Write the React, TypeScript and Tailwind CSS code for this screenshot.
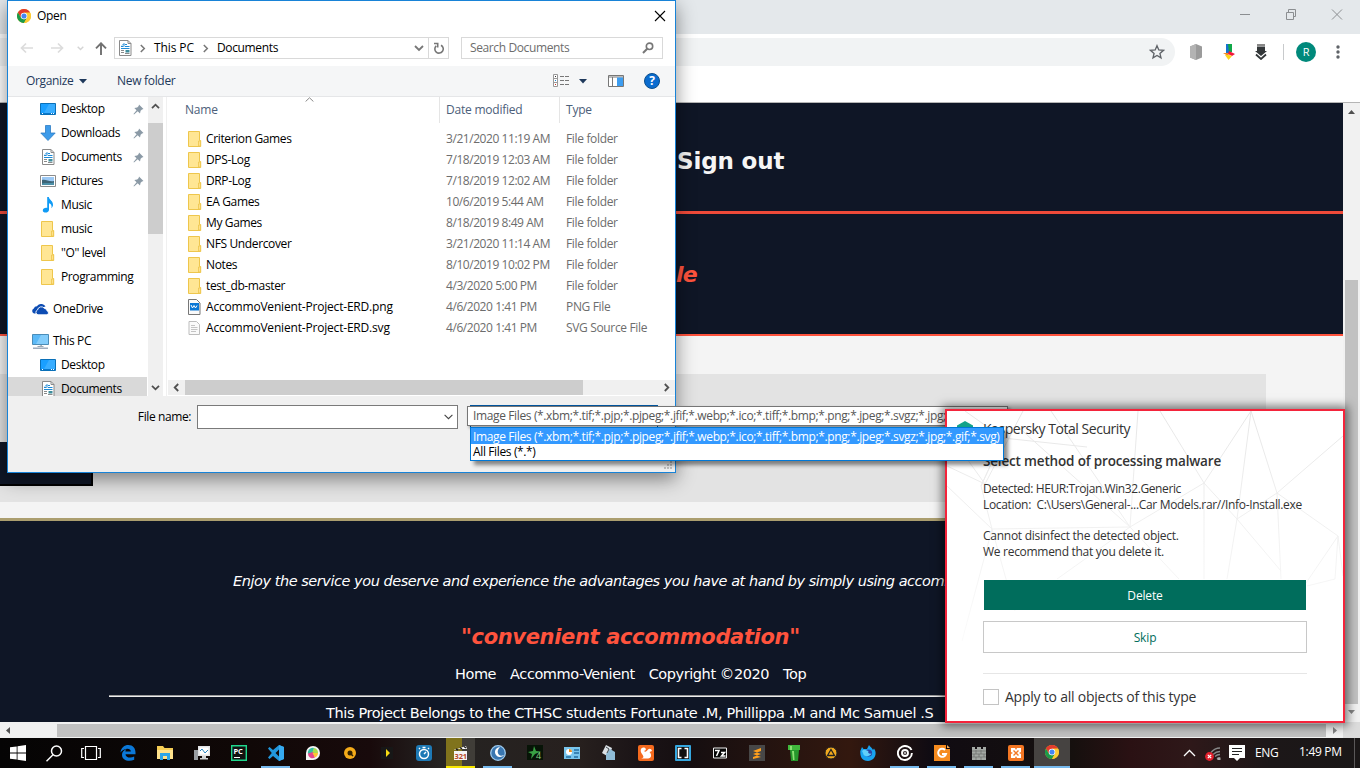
import React from "react";

const MASK = "*.xbm;*.tif;*.pjp;*.pjpeg;*.jfif;*.webp;*.ico;*.tiff;*.bmp;*.png;*.jpeg;*.svgz;*.jpg;*.gif;*.svg";

function Chrome({ s = 14 }: { s?: number }) {
  return (
    <svg width={s} height={s} viewBox="0 0 24 24" className="shrink-0">
      <circle cx="12" cy="12" r="12" fill="#fbc116" />
      <path d="M1.6 6A12 12 0 0 1 22.4 6L12 6.3 6.8 15Z" fill="#e33b2e" />
      <path d="M1.6 6A12 12 0 0 0 12 24L17.2 15 12 18 6.8 15Z" fill="#1a9a4b" />
      <path d="M12 6.3H22.6A12 12 0 0 1 12 24L17.5 14Z" fill="#fdcb35" />
      <circle cx="12" cy="12" r="5.6" fill="#fff" />
      <circle cx="12" cy="12" r="4.4" fill="#4486f4" />
    </svg>
  );
}

function Folder() {
  return (
    <svg width="14" height="16" viewBox="0 0 14 16" className="shrink-0">
      <path d="M.5.5h11v9h1.200v6H.5z" fill="#ffe694" stroke="#eec64c" />
      <path d="M10.500 15V10h2v5z" fill="#ffe08a" stroke="#eec64c" strokeWidth=".8" />
    </svg>
  );
}

function DocIcon() {
  return (
    <svg width="13" height="16" viewBox="0 0 13 16" className="shrink-0">
      <path d="M.5.5h8.500l3 3v12H.5z" fill="#fff" stroke="#8a8a8a" />
      <path d="M9 .5v3h3" fill="none" stroke="#8a8a8a" />
      <path d="M2 6.500h2.500M6 4.500h2M6 6.500h4.500M2 8.500h8.500" stroke="#1e8ad6" />
      <path d="M3 5.500l2-2v3" fill="none" stroke="#1e8ad6" />
      <path d="M2 10.500h3M2 12.500h3M6 13.500h4.500" stroke="#8a8a8a" />
      <path d="M6.500 10h4v2.500h-4z" fill="#3e8d9c" />
    </svg>
  );
}

function DesktopIcon() {
  return (
    <svg width="16" height="12" viewBox="0 0 16 12" className="shrink-0">
      <path d="M.5.5h15v11H.5z" fill="#1a9fff" stroke="#0a70b8" />
      <path d="M9 1h6v9H4z" fill="#39adff" />
      <path d="M1 10.500h14" stroke="#0877cc" />
      <path d="M2 10.500h1M11 10.500h1M13 10.500h1" stroke="#fff" />
    </svg>
  );
}

function DownloadIcon() {
  return (
    <svg width="16" height="16" viewBox="0 0 16 16">
      <path d="M5.500.5h5v7.500h4.700L8 15.500.8 8h4.700z" fill="#3d9bea" stroke="#2d7cc4" strokeWidth=".8" />
    </svg>
  );
}

function PictureIcon() {
  return (
    <svg width="16" height="12" viewBox="0 0 16 12">
      <path d="M.5.5h15v11H.5z" fill="#fff" stroke="#8b8b8b" />
      <path d="M2 2h12v8H2z" fill="#9cc9f5" />
      <path d="M2 5c4-1 7 2 12 1v4H2z" fill="#3d6577" />
      <path d="M2 8.500c4-1 8 0 12-1V10H2z" fill="#4d90a8" />
    </svg>
  );
}

function MusicIcon() {
  return (
    <svg width="12" height="16" viewBox="0 0 12 16">
      <path d="M5.200 0h1.600c.4 3 4.700 4 4.200 8.500-.2 1.200-1 2.200-1.600 2.700.8-3-.7-4.600-2.400-5v6.500c0 1.800-1.600 2.900-3.300 2.900C2 15.600.8 14.700.8 13.400c0-1.700 2.100-3 4.400-2.500z" fill="#109bf5" />
    </svg>
  );
}

function OneDriveIcon() {
  return (
    <svg width="17" height="11" viewBox="0 0 17 11">
      <path d="M3.500 9.500H2A2.600 2.600 0 0 1 1.800 4.600 3.300 3.300 0 0 1 5 2.200 5 5 0 0 1 13.500 2.500L8 4Z" fill="#0d4cb3" />
      <path d="M6 10.800A2.500 2.500 0 0 1 5.500 6 3.900 3.900 0 0 1 12.500 4.400 3.100 3.100 0 0 1 15.200 7 2 2 0 0 1 15 10.800Z" fill="#0d4cb3" stroke="#fff" strokeWidth=".9" />
    </svg>
  );
}

function PcIcon() {
  return (
    <svg width="17" height="15" viewBox="0 0 17 15">
      <path d="M.5.5h16v10H.5z" fill="#5bb9f7" stroke="#4b8db8" />
      <path d="M9 1h7v9H4z" fill="#84cdfb" />
      <path d="M7 11h3v1H5.500v1h6v-1" fill="#9aa7b2" />
      <path d="M1 14.200h15" stroke="#8e9fb3" strokeWidth="1.300" />
    </svg>
  );
}

function Pin() {
  return (
    <svg width="11" height="11" viewBox="0 0 11 11">
      <path d="M6 .5 10.500 5 9 5.400 7.600 6.800 7 9.500 4.700 7.300 1 10.500.5 10 3.600 6.200 1.300 4 4.200 3.500 5.700 2z" fill="#8b9aa6" />
    </svg>
  );
}

function FileIcon({ png }: { png: boolean }) {
  return (
    <svg width="13" height="16" viewBox="0 0 13 16" className="shrink-0">
      <path d={png ? "M.5.5h8l3.500 3.500v11.500H.5z" : "M1 1.500h7.500l3 3v10H1z"} fill="#fafafa" stroke={png ? "#777" : "#bdbdbd"} />
      {png ? (
        <>
          <path d="M2 4h9v7.500H2z" fill="#0a77d5" />
          <path d="m3 6 1.500 3 1.500-2.500L7.500 9 9 6.500" fill="none" stroke="#fff" />
        </>
      ) : (
        <path d="M3 5.500h4M3 7.500h6.500M3 9.500h6.500M3 11.500h5" stroke="#c4c4c4" />
      )}
    </svg>
  );
}

function Arrow({ d, c = "#505050", w = 1.8 }: { d: string; c?: string; w?: number }) {
  return (
    <svg width="9" height="9" viewBox="0 0 9 9" className="shrink-0">
      <path d={d} fill="none" stroke={c} strokeWidth={w} />
    </svg>
  );
}
const UP = "M1 6.200 4.500 2.700 8 6.200";
const DOWN = "M1 2.800 4.500 6.300 8 2.800";
const LEFT = "M6.200 1 2.700 4.500 6.200 8";
const RIGHT = "M2.800 1 6.300 4.500 2.800 8";

function Side({ icon, text, pin, root }: { icon: React.ReactNode; text: string; pin?: boolean; root?: boolean }) {
  return (
    <div className={root ? "flex h-6 shrink-0 items-center pl-6" : "flex h-6 shrink-0 items-center pl-8"}>
      <span className={root ? "flex w-[17px] justify-center" : "flex w-4 justify-center"}>{icon}</span>
      <span className={root ? "ml-1 flex-1 tracking-[-0.35px]" : "ml-[5px] flex-1 tracking-[-0.38px]"}>{text}</span>
      {pin && (
        <span className="mr-1">
          <Pin />
        </span>
      )}
    </div>
  );
}

const files = [
  ["Criterion Games", "3/21/2020 11:19 AM", "File folder"],
  ["DPS-Log", "7/18/2019 12:03 AM", "File folder"],
  ["DRP-Log", "7/18/2019 12:02 AM", "File folder"],
  ["EA Games", "10/6/2019 5:44 AM", "File folder"],
  ["My Games", "8/18/2019 8:49 AM", "File folder"],
  ["NFS Undercover", "3/21/2020 11:14 AM", "File folder"],
  ["Notes", "8/10/2019 10:02 PM", "File folder"],
  ["test_db-master", "4/3/2020 5:00 PM", "File folder"],
  ["AccommoVenient-Project-ERD.png", "4/6/2020 1:41 PM", "PNG File"],
  ["AccommoVenient-Project-ERD.svg", "4/6/2020 1:41 PM", "SVG Source File"],
];

function OpenDialog() {
  return (
    <div className="absolute left-[7px] top-0 flex h-[473px] w-[669px] flex-col border border-[#1883d7] bg-white shadow-[0_6px_18px_rgba(0,0,0,0.45)]">
      <div className="flex h-[29px] shrink-0 items-center pl-[9px] pr-[9px]">
        <Chrome />
        <span className="ml-1.5 flex-1 tracking-[-0.3px]">Open</span>
        <svg width="12" height="12" viewBox="0 0 12 12">
          <path d="M1 1l10 10M11 1 1 11" stroke="#000" strokeWidth="1.100" />
        </svg>
      </div>
      <div className="flex h-[36px] shrink-0 items-center pl-[12px]">
        <svg width="14" height="12" viewBox="0 0 14 12">
          <path d="M13 6H1.500M6 1.500 1.500 6 6 10.500" fill="none" stroke="#dcdcdc" strokeWidth="1.700" />
        </svg>
        <svg className="ml-4" width="14" height="12" viewBox="0 0 14 12">
          <path d="M1 6h11.500M8 1.500 12.500 6 8 10.500" fill="none" stroke="#dcdcdc" strokeWidth="1.700" />
        </svg>
        <svg className="ml-[13px]" width="7" height="5" viewBox="0 0 7 5">
          <path d="M.7.7 3.500 3.500 6.300.7" fill="none" stroke="#d4d4d4" strokeWidth="1.400" />
        </svg>
        <svg className="ml-[11px]" width="12" height="13" viewBox="0 0 12 13">
          <path d="M6 13V1.500M1 6.300 6 1.300l5 5" fill="none" stroke="#707070" strokeWidth="1.900" />
        </svg>
        <div className="ml-[7px] flex h-[22px] w-[335px] items-center border border-[#d9d9d9] pl-1">
          <DocIcon />
          <span className="ml-[6px]">
            <Arrow d={RIGHT} c="#777" w={1.5} />
          </span>
          <span className="ml-[7px] w-[41px] pb-px tracking-[-0.1px] whitespace-nowrap">This PC</span>
          <span className="ml-[6px]">
            <Arrow d={RIGHT} c="#777" w={1.5} />
          </span>
          <span className="ml-[7px] flex-1 pb-px tracking-[-0.36px]">Documents</span>
          <svg width="10" height="7" viewBox="0 0 10 7" className="mr-1">
            <path d="M1 1l4 4 4-4" fill="none" stroke="#777" strokeWidth="1.800" />
          </svg>
          <div className="flex h-[20px] w-[20px] items-center justify-center border-l border-[#d9d9d9]">
            <svg width="11" height="12" viewBox="0 0 11 12">
              <path d="M8 3.200A4.200 4.200 0 1 1 3.200 3.800M1 1.500h3.700V5.500" fill="none" stroke="#777" strokeWidth="1.600" />
            </svg>
          </div>
        </div>
        <div className="ml-3 flex h-[22px] w-[202px] items-center border border-[#d9d9d9] px-2 text-[#6d6d6d]">
          <span className="flex-1 tracking-[-0.38px]">Search Documents</span>
          <svg width="12" height="12" viewBox="0 0 12 12">
            <circle cx="7.500" cy="4.300" r="3.200" fill="none" stroke="#777" strokeWidth="1.600" />
            <path d="M5.200 6.700 1 11" stroke="#777" strokeWidth="2" />
          </svg>
        </div>
      </div>
      <div className="flex h-[31px] shrink-0 items-center border-b border-[#e5e6e8] bg-[#f5f6f7] pl-[18px] text-[#1e395b]">
        <span className="w-[48px] tracking-[-0.35px]">Organize</span>
        <svg width="8" height="5" viewBox="0 0 8 5" className="ml-[5px]">
          <path d="M0 0h8L4 4.500z" fill="#1e395b" />
        </svg>
        <span className="ml-[30px] flex-1 tracking-[-0.3px]">New folder</span>
        <svg width="17" height="14" viewBox="0 0 17 14">
          <path d="M.5.5h4v12h-4zM.5 4.500h4M.5 8.500h4" fill="#fff" stroke="#999" />
          <path d="M7 2.500h4M12 2.500h4M7 6.500h4M12 6.500h4M7 10.500h4M12 10.500h4" stroke="#777" />
          <path d="M2 2.500h1" stroke="#333" />
          <path d="M2 6.500h1" stroke="#1883d7" />
          <path d="M2 10.500h1" stroke="#c32" />
        </svg>
        <svg width="8" height="5" viewBox="0 0 8 5" className="ml-[9px]">
          <path d="M0 0h8L4 4.500z" fill="#1e395b" />
        </svg>
        <svg width="16" height="12" viewBox="0 0 16 12" className="ml-[21px]">
          <path d="M.5.5h15v11H.5zM.5 2h15M4.500 2v9" fill="#fff" stroke="#777" />
          <path d="M9 2.500h6V11H9z" fill="#3d9df0" />
        </svg>
        <span className="ml-5 mr-[15px] flex size-4 items-center justify-center rounded-full border border-[#0b4f8d] bg-[#0a6ccf] text-[12px] leading-none font-bold text-white">?</span>
      </div>
      <div className="flex h-[299px] shrink-0 overflow-hidden">
        <div className="flex w-[140px] shrink-0 flex-col overflow-hidden">
          <Side icon={<DesktopIcon />} text="Desktop" pin />
          <Side icon={<DownloadIcon />} text="Downloads" pin />
          <Side icon={<DocIcon />} text="Documents" pin />
          <Side icon={<PictureIcon />} text="Pictures" pin />
          <Side icon={<MusicIcon />} text="Music" />
          <Side icon={<Folder />} text="music" />
          <Side icon={<Folder />} text={"''O'' level"} />
          <Side icon={<Folder />} text="Programming" />
          <div className="mt-2 shrink-0">
            <Side root icon={<OneDriveIcon />} text="OneDrive" />
          </div>
          <div className="mt-2 shrink-0">
            <Side root icon={<PcIcon />} text="This PC" />
          </div>
          <Side icon={<DesktopIcon />} text="Desktop" />
          <div className="mr-px bg-[#d9d9d9]">
            <Side icon={<DocIcon />} text="Documents" />
          </div>
        </div>
        <div className="flex w-[15px] shrink-0 flex-col items-center bg-[#f0f0f0]">
          <div className="flex h-[26px] items-start pt-[5px]">
            <Arrow d={UP} />
          </div>
          <div className="h-[111px] w-full bg-[#cdcdcd]" />
          <div className="mt-auto flex h-[13px]">
            <Arrow d={DOWN} />
          </div>
        </div>
        <div className="ml-[3px] mr-px w-px bg-[#f0f0f0]" />
        <div className="flex min-w-0 flex-1 flex-col">
          <div className="flex h-[26px] shrink-0 items-stretch tracking-[-0.22px] text-[#4c607a]">
            <div className="relative w-[272px] border-r border-[#e5e5e5] pl-[17px] leading-[26px]">
              Name
              <svg width="9" height="5" viewBox="0 0 9 5" className="absolute left-[137px] top-0">
                <path d="M.6 4.500 4.500.8 8.400 4.500" fill="none" stroke="#888" />
              </svg>
            </div>
            <div className="w-[120px] border-r border-[#e5e5e5] pl-1.5 leading-[26px]">Date modified</div>
            <div className="pl-1.5 leading-[26px]">Type</div>
          </div>
          <div className="mt-[5px] flex flex-1 flex-col">
            {files.map((f, i) => (
              <div key={f[0]} className="flex h-[21px] items-center pl-5">
                <span className="w-[18px]">{i < 8 ? <Folder /> : <FileIcon png={i === 8} />}</span>
                <span className={i < 8 ? "w-[240px] tracking-[-0.37px]" : "w-[240px] tracking-[-0.19px]"}>{f[0]}</span>
                <span className="w-[120px] tracking-[-0.44px] text-[#6d6d6d]">{f[1]}</span>
                <span className="tracking-[-0.34px] text-[#6d6d6d]">{f[2]}</span>
              </div>
            ))}
          </div>
          <div className="mb-px flex h-[15px] shrink-0 items-center bg-[#f0f0f0] pl-1">
            <Arrow d={LEFT} />
            <div className="ml-1 h-full w-[398px] bg-[#cdcdcd]" />
            <span className="ml-[79px]">
              <Arrow d={RIGHT} />
            </span>
          </div>
        </div>
      </div>
      <div className="flex flex-1 items-start bg-[#f0f0f0] pt-[9px]">
        <span className="mt-[4px] w-[183px] text-right leading-4 tracking-[-0.4px]">File name:</span>
        <div className="ml-[6px] flex h-6 w-[261px] items-center justify-end border border-[#7a7a7a] bg-white pr-1">
          <svg width="9" height="6" viewBox="0 0 9 6">
            <path d="M.6.8 4.500 4.700 8.400.8" fill="none" stroke="#444" strokeWidth="1.100" />
          </svg>
        </div>
        <div className="ml-3 h-6 w-[188px] border border-[#0055a0] bg-white" />
      </div>
      <svg width="10" height="9" viewBox="0 0 10 9" className="absolute bottom-0.5 right-0.5">
        <path d="M7 0h2v2H7zM7 3h2v2H7zM4 3h2v2H4zM7 6h2v2H7zM4 6h2v2H4zM1 6h2v2H1z" fill="#bfbfbf" />
      </svg>
    </div>
  );
}

function Kaspersky() {
  return (
    <div className="absolute left-[945px] top-[409px] flex h-[314px] w-[400px] flex-col border-2 border-[#f4243b] bg-white pl-9 pr-9 text-[#333] shadow-[0_0_9px_3px_rgba(0,0,0,0.5)]">
      <svg width="396" height="310" viewBox="0 0 396 310" className="absolute left-0 top-0">
        <defs>
          <linearGradient id="fade" gradientUnits="userSpaceOnUse" x1="0" y1="0" x2="0" y2="230">
            <stop offset="0" stopColor="#e6e6e6" />
            <stop offset="1" stopColor="#fbfbfb" />
          </linearGradient>
        </defs>
        <g fill="none" stroke="url(#fade)">
          <path d="M18 0 56 27 34 75M76 0 38 73 0 20M104 0 183 116 191 0M213 0 257 72 304 0M257 72 183 116M257 72V168M304 0 330 82 396 25M330 82 290 108 257 72M304 0 290 108M330 82 391 125 359 172M38 73 0 55M70 15 183 116 45 118 34 75M183 116 110 168M183 116 232 168M290 108 280 168M290 108 334 160M330 82 334 168M45 118 0 75M45 118 68 200M45 118 15 230M391 125 396 165M391 125 388 168 360 175M34 75 56 27 140 36" />
        </g>
        <path d="M18 10 26 14.500v16H10v-16Z" fill="#13a38a" />
        <circle cx="18" cy="20" r="4" fill="#c9f3e9" />
      </svg>
      <div className="relative flex flex-1 flex-col">
        <div className="mt-[8px] h-[20px] text-[14px] leading-5 tracking-[-0.46px]">Kaspersky Total Security</div>
        <div className="mt-[12px] h-5 text-[13.500px] leading-5 font-semibold tracking-[-0.17px]">Select method of processing malware</div>
        <div className="mt-[10px] h-4 leading-4 tracking-[-0.41px]">Detected: HEUR:Trojan.Win32.Generic</div>
        <div className="h-4 leading-4 tracking-[-0.33px] whitespace-pre">Location:  C:\Users\General-...Car Models.rar//Info-Install.exe</div>
        <div className="mt-[15px] h-4 leading-4 tracking-[-0.26px]">Cannot disinfect the detected object.</div>
        <div className="h-4 leading-4 tracking-[-0.29px]">We recommend that you delete it.</div>
        <div className="mx-px mt-[20px] flex h-[30px] items-center justify-center bg-[#006d5c] pt-0.5 text-white">Delete</div>
        <div className="mt-[11px] flex h-8 items-center justify-center border border-[#c8c8c8] bg-white pt-0.5 text-[#006d5c]">Skip</div>
        <div className="mt-5 h-px bg-[#e6e6e6]" />
        <div className="mt-[15px] flex items-center">
          <div className="size-4 border border-[#c4c4c4] bg-white" />
          <span className="ml-1.5 text-[14px] leading-4 tracking-[-0.23px]">Apply to all objects of this type</span>
        </div>
      </div>
    </div>
  );
}

function BrowserTop() {
  return (
    <>
      <div className="flex h-[34px] shrink-0 items-start justify-end bg-[#e4e8eb] pr-[17px] pt-[9px]">
        <svg width="104" height="11" viewBox="0 0 104 11">
          <path d="M1 5.500h10M47.500 3.500h7v7h-7zM49.500 3.500v-3h7v7h-2M93 .5l10 10M103 .5l-10 10" fill="none" stroke="#8b8e91" />
        </svg>
      </div>
      <div className="flex h-[34px] shrink-0 items-center bg-white pt-0.5">
        <div className="flex h-7 w-[1175px] items-center justify-end rounded-r-full bg-[#f1f3f4] pr-[10px]">
          <svg width="16" height="16" viewBox="0 0 24 24">
            <path d="m12 2.500 2.700 6.400 7 .6-5.300 4.600 1.600 6.800-6-3.600-6 3.600 1.600-6.800L2.300 9.500l7-.6z" fill="none" stroke="#5f6368" strokeWidth="2" />
          </svg>
        </div>
        <svg width="14" height="16" viewBox="0 0 14 16" className="ml-[14px]">
          <path d="M7 0 13 2.500v11L7 16 1 13.500V2.500z" fill="#9b9b9b" />
          <path d="M7 0v16L1 13.500V2.500z" fill="#b3b3b3" />
        </svg>
        <svg width="12" height="16" viewBox="0 0 12 16" className="ml-5">
          <path d="M3 0h3v9H3z" fill="#1673d1" />
          <path d="M5 0h4v8H6z" fill="#10a848" />
          <path d="M0 9h6l-1 3z" fill="#f68a1e" />
          <path d="M6 7l6 3-3 2-4-2z" fill="#f2183c" />
          <path d="M2 11l4 0 3 1-3.500 4z" fill="#ffd51a" />
        </svg>
        <svg width="12" height="16" viewBox="0 0 12 16" className="ml-5">
          <path d="M2 0h8v2H2z" fill="#888" />
          <path d="M2 2.500h8V7h2L6 12 0 7h2z" fill="#333739" />
          <path d="M1 10.500 6 15l5-4.500" fill="none" stroke="#333739" strokeWidth="1.800" />
        </svg>
        <div className="ml-4 h-4 w-px bg-[#c8cacc]" />
        <div className="ml-3 flex size-5 items-center justify-center rounded-full bg-[#00897b] text-[11px] text-white">R</div>
        <svg width="4" height="14" viewBox="0 0 4 14" className="ml-[20px]">
          <g fill="#5f6368">
            <circle cx="2" cy="2" r="1.700" />
            <circle cx="2" cy="7" r="1.700" />
            <circle cx="2" cy="12" r="1.700" />
          </g>
        </svg>
      </div>
      <div className="h-[35px] shrink-0 border-b border-[#b5b5b5] bg-white" />
    </>
  );
}

function WebPage() {
  return (
    <div className="flex h-[619px] shrink-0">
      <div className="flex h-full w-[1343px] shrink-0 flex-col overflow-hidden bg-[#f4f4f4] font-['DejaVu_Sans',Verdana,sans-serif] text-white">
        <div className="h-[111px] shrink-0 border-b-[3px] border-[#ef4a39] bg-[#0f1626] pl-[677px] pt-[43px] text-[23px] leading-[30px] font-bold text-[#f5f5f5]">Sign out</div>
        <div className="h-[122px] shrink-0 border-b-2 border-[#ff533d] bg-[#0f1626] pl-[676px] pt-[46px] text-[22px] leading-[30px] font-bold tracking-[-0.8px] text-[#ff533d] italic">le</div>
        <div className="mt-[38px] flex h-[128px] w-[1266px] shrink-0 items-start bg-[#e3e3e3] pt-[68px]">
          <div className="h-11 w-[93px] border-r-2 border-b-2 border-black bg-[#0f1626]" />
        </div>
        <div className="mt-4 flex flex-1 flex-col overflow-hidden border-t-[3px] border-[#ab9e6f] bg-[#0f1626] whitespace-nowrap">
          <div className="mt-[50px] h-5 pl-[233px] text-[14.500px] leading-5 tracking-[-0.46px] italic">Enjoy the service you deserve and experience the advantages you have at hand by simply using accommo-venient</div>
          <div className="mt-[32px] h-[28px] pl-[461px] text-[21px] leading-7 font-bold tracking-[-0.35px] text-[#ff533d] italic">"convenient accommodation"</div>
          <div className="mt-[13px] flex h-5 gap-[14px] pl-[455px] text-[14.500px] leading-5 tracking-[-0.43px]">
            <span>Home</span>
            <span>Accommo-Venient</span>
            <span>Copyright ©2020</span>
            <span>Top</span>
          </div>
          <div className="ml-[109px] mt-[11px] h-[2px] w-[1125px] shrink-0 border-t border-[#9a9a9a] bg-[#eeeeee]" />
          <div className="mt-[6px] h-5 shrink-0 pl-[326px] text-[14.500px] leading-5 tracking-[-0.36px]">This Project Belongs to the CTHSC students Fortunate .M, Phillippa .M and Mc Samuel .S</div>
        </div>
      </div>
      <div className="flex w-[17px] flex-col items-center bg-[#f1f1f1]">
        <svg width="7" height="4" viewBox="0 0 7 4" className="mt-[7px]">
          <path d="M0 4h7L3.500 0z" fill="#505050" />
        </svg>
        <div className="mt-[166px] h-[424px] w-[13px] bg-[#c1c1c1]" />
        <svg width="7" height="4" viewBox="0 0 7 4" className="mt-[6px]">
          <path d="M0 0h7L3.500 4z" fill="#858585" />
        </svg>
      </div>
    </div>
  );
}

const taskIcons: React.ReactNode[] = [
  <path key="0" d="M0.500 7.500C1 2.500 4.500 0 8.300 0 13 0 15.500 3.500 15.500 7.500v1.700H5.500c.2 3.800 5.500 4.200 8.700 2.300v3.200C9 17.200 2 15.500 2 9.800 2 7 4 5 6.500 4 5.700 5 5.500 5.800 5.400 6.500h5.400C10.800 2.600 4 2.800.5 7.500Z" fill="#0b78d8" />,
  <g key="1"><path d="M0 1h6l1.500 2H16v11H0z" fill="#f5cd55" /><path d="M0 5h16v9H0z" fill="#ffe28c" /><path d="M3 15V8h10v7h-3v-4H6v4z" fill="#2ca5e8" /></g>,
  <g key="2"><path d="M0 5h4v10H0z" fill="#989da2" /><path d="M4 1h12v10H4z" fill="#e2e4e6" /><path d="M5.500 2.500h9v7h-9z" fill="#fff" /><path d="M6 6l2-2 3 4 3-3" fill="none" stroke="#2786c2" /><path d="M8 11h4v2h2v1.500H6V13h2z" fill="#cfd3d6" /></g>,
  <g key="3"><path d="M.7.7h14.600v14.600H.7z" fill="#111" stroke="#1fd78c" strokeWidth="1.400" /><text x="2.500" y="8.500" fontSize="7.500" fontWeight="bold" fill="#fff" fontFamily="Open Sans">PC</text><path d="M3 12.500h6" stroke="#fff" /></g>,
  <g key="4"><path d="M11 0 16 2v12l-5 2-6-5-3.500 3L0 12.500 3.800 8 0 3.500 1.500 2 5 5Zm0 4.500L7.500 8 11 11.500Z" fill="#2297dc" /><path d="M11 0 16 2v12l-5 2z" fill="#36aaf0" /></g>,
  <g key="5"><path d="M1 15V8a7 7 0 1 1 7 7z" fill="#f6f6f6" /><path d="M3 9a5 5 0 0 1 6-6L8 8z" fill="#32bea4" /><path d="M9 3a5 5 0 0 1 4 5L7 8z" fill="#a9dd4f" /><path d="M3 8.500 8 7l2 5.500c-3 2-7 0-7-4z" fill="#e5468c" /><path d="M13 8a5 5 0 0 1-3 4.500L7.500 8z" fill="#ffc534" /></g>,
  <g key="6"><circle cx="8" cy="8" r="6" fill="#f5ab19" /><circle cx="8" cy="8" r="2.500" fill="#332200" /><path d="m8 8 3 3" stroke="#332200" strokeWidth="1.500" /></g>,
  <g key="7"><path d="M2 2h12v12H2z" fill="#171717" /><path d="M7 4l4 4-4 4z" fill="#f7dc14" /></g>,
  <g key="8"><rect width="16" height="16" rx="3" fill="#1d79b5" /><circle cx="8" cy="9" r="4.500" fill="none" stroke="#fff" strokeWidth="1.500" /><path d="M8 9l2-2M6.500 2.500h3M3 4l1-1M13 4l-1-1" stroke="#fff" strokeWidth="1.400" /></g>,
  <g key="9"><path d="M1 6h13v9H1z" fill="#f5f5f5" /><path d="M1 5 13 1l1 3H2z" fill="#fff" /><path d="m3 4 2 1M7 2.500l2 1.500M11 1.500l2 1.500" stroke="#222" strokeWidth="1.500" /><text x="1.500" y="13.500" fontSize="7.500" fontWeight="bold" fill="#b84726" fontFamily="Open Sans">321</text></g>,
  <g key="10"><circle cx="8" cy="8" r="7.300" fill="#3976b0" stroke="#9cc9ed" strokeWidth="1.300" /><path d="M10 2a5 5 0 1 0 4 8c-5 3-9-3-4-8z" fill="#fff" /></g>,
  <g key="11"><path d="M0 0h16v15H0z" fill="#071407" /><path d="M7 1l2 5 5 .5L8 9l-4 5 1-5-4-2 5-1z" fill="#39a244" /><text x="9" y="14" fontSize="9" fill="#8bd785" fontFamily="Open Sans">4</text></g>,
  <g key="12"><rect y="2" width="16" height="12" fill="#78c5ec" /><circle cx="5" cy="7" r="3" fill="#fff" /><path d="M5 4v3h3a3 3 0 0 0-3-3z" fill="#ee8f1e" /><path d="M10 5h5M10 8h5M2 12h5M10 12h4" stroke="#236fa3" strokeWidth="1.300" /></g>,
  <g key="13"><path d="M1 8 5 0l6 3-3 9z" fill="#dce1e5" /><path d="M5 9 9 4l5 3v8H5z" fill="#8fbcd7" /><path d="m5 2 3 2-2 4" fill="none" stroke="#434b51" /></g>,
  <g key="14"><rect width="16" height="16" rx="2" fill="#f56a1e" /><path d="M3 13.500c3.500-.5 2.500-2.500 1-4.500C1.500 5.500 3 2 6 2.500 8.500 3 8.500 6 6 5.800 7 8 9 6 10 4.500c1.500-1.500 3.500-.5 4 1.500l-2.500 1c2.500 2.500 2 6.500-1.500 6.500z" fill="#fff" /></g>,
  <g key="15"><rect width="16" height="16" rx="1" fill="#35a7df" /><path d="M2 2h12v12H2z" fill="#111" /><path d="M6.500 3.500h-3v9h3M9.500 3.500h3v9h-3" fill="none" stroke="#fff" strokeWidth="1.600" /></g>,
  <g key="16"><path d="M1.500 3h13v10h-13z" fill="#050505" stroke="#eee" /><path d="M3 5.500h4L4.500 11M9 7.500h3.500L9.500 11h4" fill="none" stroke="#fff" strokeWidth="1.500" /></g>,
  <g key="17"><path d="M0 0h16v16H0z" fill="#474747" /><path d="M12 3 4 6v3l8-3zM4 6l8 3v3L4 9zM12 9 4 12v2l8-2z" fill="#ff9f1c" /></g>,
  <g key="18"><path d="M2 0h12v5H2z" fill="#40b83c" /><path d="M4 5h9l-1 11H5z" fill="#26972c" /><path d="M4 1h2v4H4zM6 6h2l.5 9H7z" fill="#8be173" /></g>,
  <g key="19"><circle cx="8" cy="8" r="6" fill="#f2a91e" stroke="#222" /><path d="M8 4.500 11.500 10.500h-7z" fill="none" stroke="#222" strokeWidth="1.300" /></g>,
  <g key="20"><path d="M.3 6 2 2l1.500 2L7 4l2-4c1 2 3 2.500 4 5l1-1.500C18 9 14 16 8 16S0 12 .3 6z" fill="#18a3f0" /><circle cx="8.500" cy="8" r="3.600" fill="#2a44a5" /><path d="M2 6c2-2.500 4-1 6.500 0-1 2 .5 3 3 2.500-2 4-8 3.500-8.500-.5z" fill="#62d0fa" /></g>,
  <g key="21" fill="none" stroke="#fff" strokeWidth="1.900"><path d="M11 1.700A7 7 0 1 0 14.900 8M11 1.700c2 .8 3 2 3.500 3.300" /><circle cx="8" cy="8" r="3" /><circle cx="8" cy="8" r=".3" /></g>,
  <g key="22"><path d="M0 0h12v4h4v12H0z" fill="#f68b1e" /><path d="M13 0v3h3z" fill="#f9ac54" /><path d="M11 5a4 4 0 1 0 1 4H8" fill="none" stroke="#fff" strokeWidth="2" /></g>,
  <g key="23"><path d="M1 2h3v2h2V2h4v2h2V2h3v13H1z" fill="#a3a8a4" /><path d="M1 6h14M1 9h14M1 12h14M5 5v4M10 5v4M3 9v3M8 9v3M13 9v3M5 12v3M10 12v3" stroke="#6b6f6a" strokeWidth=".7" /></g>,
  <g key="24"><rect width="16" height="16" rx="2" fill="#f37623" /><path d="M3 3h4l1 2 1-2h4v4l-2 1 2 1v4H9l-1-2-1 2H3V9l2-1-2-1z" fill="#fff" /><path d="M5.500 5.500l5 5M10.500 5.500l-5 5" stroke="#f37623" strokeWidth="1.400" /></g>,
];

function Taskbar() {
  const underlined = [4, 10, 21, 22, 23, 24];
  return (
    <div className="flex h-[30px] shrink-0 bg-[linear-gradient(90deg,#050404_0px,#100807_250px,#180a0b_370px,#252322_440px,#27201e_580px,#1a1316_640px,#150e10_690px,#33180f_850px,#100b12_930px,#15100e_1071px,#2a1113_1130px,#2e1819_1190px,#1c1718_1270px,#1a1717_1360px)] text-white">
      <div className="flex w-9 items-center justify-center">
        <svg width="16" height="16" viewBox="0 0 16 16">
          <path d="M0 2.300 6.700 1.400v6.200H0zM7.500 1.300 16 0v7.600H7.500zM0 8.400h6.700v6.200L0 13.700zM7.500 8.400H16V16l-8.500-1.200z" fill="#fff" />
        </svg>
      </div>
      <div className="flex w-9 items-center justify-center">
        <svg width="17" height="17" viewBox="0 0 17 17">
          <circle cx="10.500" cy="6" r="5" fill="none" stroke="#fff" strokeWidth="1.500" />
          <path d="m7 9.800-6.500 6.500" stroke="#fff" strokeWidth="1.500" />
        </svg>
      </div>
      <div className="flex w-[37px] items-center justify-center">
        <svg width="20" height="16" viewBox="0 0 20 16">
          <path d="M4.500 1.500h11v13h-11zM3 3.500H.7v9H3M17 3.500h2.300v9H17" fill="none" stroke="#fff" strokeWidth="1.200" />
        </svg>
      </div>
      {taskIcons.map((ic, i) => (
        <div
          key={i}
          className={
            i === 9
              ? "mx-1 flex w-[29px] flex-col items-center border-b-2 border-[#f8e800] bg-[linear-gradient(90deg,#80731c_16px,#403d38_16px)] pt-[7px]"
              : underlined.includes(i)
                ? "mx-1 flex w-[29px] flex-col items-center border-b-2 border-[#76b9ed] pt-[7px]"
                : "mx-1 flex w-[29px] flex-col items-center pt-[7px]"
          }
        >
          <svg width="16" height="16" viewBox="0 0 16 16">{ic}</svg>
        </div>
      ))}
      <div className="flex w-[36px] items-center justify-center border-b-2 border-[#76b9ed] bg-[#464341]">
        <Chrome />
      </div>
      <svg width="13" height="8" viewBox="0 0 13 8" className="ml-[113px] mt-[11px]">
        <path d="M1 7l5.500-5.500L12 7" fill="none" stroke="#fff" strokeWidth="1.300" />
      </svg>
      <svg width="16" height="14" viewBox="0 0 16 14" className="ml-[9px] mt-[9px]">
        <path d="M6 5.500C8 3 11 1 15 1M8 7.500C10 5.500 12 4.500 15 4.500M10 9.500c1-1 3-2 5-2M12 12c1-1 2-1.200 3-1.200" fill="none" stroke="#888" strokeWidth="1.300" />
        <path d="M12.500 10.500h3V13h-3z" fill="#aaa" />
        <circle cx="4.500" cy="9.500" r="4.400" fill="#e01e2b" />
        <path d="m2.800 7.800 3.400 3.400M6.200 7.800 2.800 11.200" stroke="#fff" strokeWidth="1.200" />
      </svg>
      <svg width="16" height="16" viewBox="0 0 16 16" className="ml-[8px] mt-[7px]">
        <path d="M0 0h16v13h-5l-3 3-3-3H0z" fill="#fff" />
        <path d="M3 3.500h10M3 6.500h10M3 9.500h7" stroke="#222" />
      </svg>
      <span className="ml-2.5 w-[26px] leading-[30px] tracking-[-0.4px]">ENG</span>
      <span className="ml-[18px] w-[46px] leading-[28px] whitespace-nowrap tracking-[-0.3px]">1:49 PM</span>
      <div className="ml-[9px] h-full w-px bg-[#5a5858]" />
    </div>
  );
}

export default function App() {
  return (
    <div className="relative flex h-[768px] w-[1360px] flex-col overflow-hidden bg-white font-['Open_Sans','Noto_Sans',sans-serif] text-[12px] leading-4 tracking-[-0.15px] text-black">
      <BrowserTop />
      <WebPage />
      <div className="flex h-[16px] shrink-0 items-center bg-[#f1f1f1] pl-[6px]">
        <svg width="4" height="7" viewBox="0 0 4 7">
          <path d="M4 0v7L0 3.500z" fill="#505050" />
        </svg>
        <div className="ml-[47px] h-[13px] w-[1269px] bg-[#c1c1c1]" />
        <svg width="4" height="7" viewBox="0 0 4 7" className="ml-[7px]">
          <path d="M0 0v7l4-3.500z" fill="#858585" />
        </svg>
        <div className="ml-auto h-full w-[17px] bg-[#dcdcdc]" />
      </div>
      <Taskbar />
      <OpenDialog />
      <div className="absolute left-[467px] top-[406px] h-5 w-[541px] overflow-hidden border border-[#767676] bg-white pl-[5px] leading-[18px] tracking-[-0.37px] whitespace-nowrap text-[#575757] shadow-[2px_2px_3px_rgba(0,0,0,0.4)]">
        Image Files ({MASK})
      </div>
      <Kaspersky />
      <div className="absolute left-[470px] top-[427px] h-[34px] w-[534px] border border-[#0078d7] bg-white tracking-[-0.37px] whitespace-nowrap shadow-[4px_4px_4px_rgba(0,0,0,0.45)]">
        <div className="h-4 bg-[#3399ff] pl-0.5 leading-[17px] text-white">Image Files ({MASK})</div>
        <div className="h-4 pl-0.5 leading-4">All Files (*.*)</div>
      </div>
    </div>
  );
}
